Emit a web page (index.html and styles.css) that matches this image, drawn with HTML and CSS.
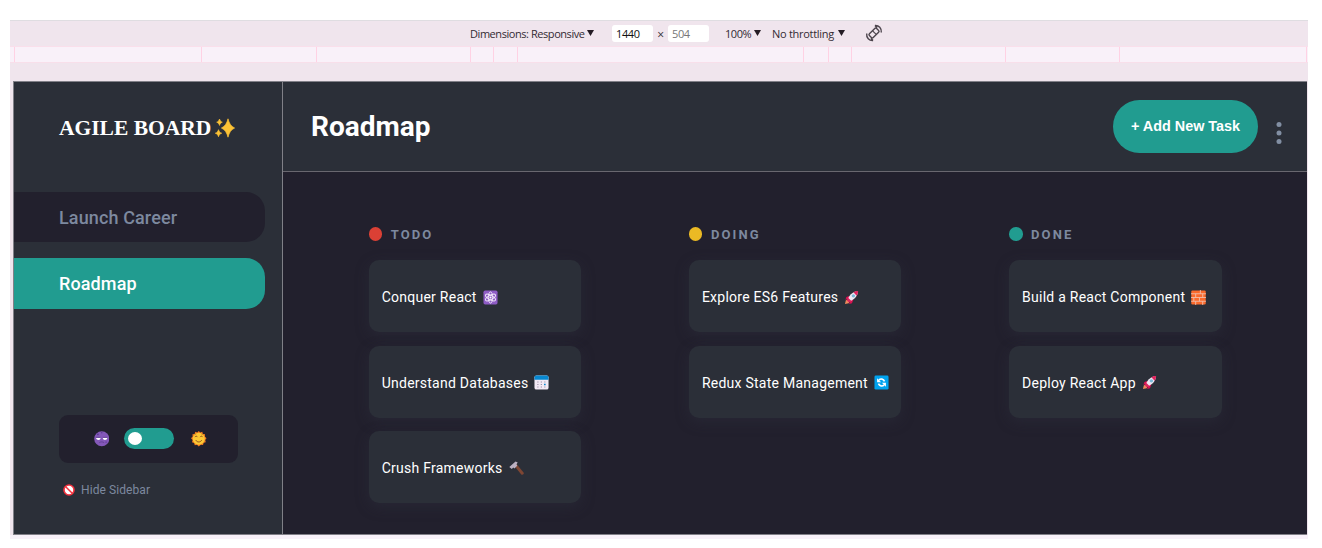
FILE: index.html
```html
<!DOCTYPE html>
<html lang="en">
<head>
<meta charset="utf-8">
<title>Agile Board</title>
<link rel="stylesheet" href="styles.css">
</head>
<body>
<svg class="defs" aria-hidden="true">
  <symbol id="rocket" viewBox="0 0 16 16">
    <path d="M1 15l1-4 3-1 1 2-1 2z" fill="#f08a5c"/>
    <path d="M6 6L2.500 7.500 1.500 10.500 5 9.500zM10 10l-1.500 4L5.500 15 6.500 11z" fill="#d81050"/>
    <path d="M15 1c-5 0-9 4-11 8.500L6.500 12C11 10 15 6 15 1z" fill="#eee7f2"/>
    <path d="M15 1c-2 0-3.500.500-5 1.500L13.500 6C14.500 4.500 15 3 15 1zM4.500 8.300L3 11l2 2 2.700-1.500z" fill="#e0245e"/>
    <circle cx="10" cy="6.200" r="1.800" fill="#79b8d8"/>
  </symbol>
</svg>
<div class="device">
  <div class="toolbar">
    <span class="t-dim">Dimensions: Responsive</span><i class="caret"></i>
    <span class="field t-w">1440</span><span class="times">×</span><span class="field t-h">504</span>
    <span class="t-zoom">100%</span><i class="caret"></i>
    <span class="t-thr">No throttling</span><i class="caret"></i>
    <svg class="rotate" viewBox="0 0 18 18" fill="none" stroke="#4c444c" stroke-width="1.400">
      <rect x="6.300" y="3.900" width="5.400" height="10.200" rx="1.300" transform="rotate(45 9 9)"/>
      <path d="M10 1.500c3.800-.3 6.800 2.700 6.300 7M10 1.500l2 2.200M8 16.500c-3.800.3-6.800-2.700-6.300-7M8 16.500l-2-2.200"/>
      <path d="M7.600 6.800l3.600 3.600" stroke-width="1.200"/>
    </svg>
  </div>
  <div class="ruler"><i></i><i></i><i></i><i></i><i></i><i></i><i></i><i></i><i></i><i></i><i></i><i></i></div>
  <div class="app">
    <aside class="sidebar">
      <div class="logo"><span>AGILE BOARD</span>
        <svg class="sparkles" viewBox="0 0 20 20" fill="#fcc235" stroke="#fcc235" stroke-width=".7" stroke-linejoin="round"><path d="M13 .8C14.200 5.500 16 8.300 19.600 10c-3.600 1.700-5.400 4.500-6.600 9.200-1.200-4.700-3-7.500-6.600-9.200C10 8.300 11.800 5.500 13 .8z"/><path d="M4.500 1c.5 1.800 1.200 2.500 2.800 3.200-1.600.7-2.300 1.400-2.800 3.200-.5-1.800-1.200-2.500-2.800-3.200C3.300 3.500 4 2.800 4.500 1zM3.500 11.700c.6 2 1.400 2.900 3.200 3.500-1.800.7-2.600 1.500-3.200 3.500-.6-2-1.400-2.800-3.200-3.500 1.800-.6 2.600-1.500 3.200-3.500z"/></svg>
      </div>
      <nav class="boards">
        <a class="board"><span class="b-launch">Launch Career</span></a>
        <a class="board active"><span class="b-road">Roadmap</span></a>
      </nav>
      <div class="theme">
        <svg class="face" viewBox="0 0 16 16"><circle cx="8" cy="8" r="7.800" fill="#8458b8"/><circle cx="4" cy="3.500" r="1" fill="#5c3d96"/><circle cx="8" cy="1.800" r=".8" fill="#5c3d96"/><circle cx="12.500" cy="11.500" r="1" fill="#6f46a5"/><path d="M2 7h4.800c0 3-4.200 3-4.800 0zM9 7h4.800c-.4 3-4.500 3-4.800 0z" fill="#fff"/><path d="M2 6.600h4.800M9 6.600h4.800M5.500 12c1.500-1 3.500-1 5 0" stroke="#5a3a8c" stroke-width=".8" fill="none"/></svg>
        <span class="switch"><i></i></span>
        <svg class="face" viewBox="0 0 16 16"><path d="M8 0l1.500 1.600L11.600.9l.7 2.100 2.200.4-.2 2.300L16 7.500l-1.300 1.700.5 2.300-2.100.7-.7 2.300-2.300-.3L8 16l-1.800-1.700-2.300.4-.7-2.300-2.200-.8.6-2.300L0 7.500l1.700-1.700-.2-2.400 2.200-.4.7-2.100 2.100.7z" fill="#f57c20"/><circle cx="8" cy="8" r="6.200" fill="#fdc934"/><path d="M4 6.300c.8-1.300 2-1.300 2.600 0M9.400 6.300c.8-1.300 2-1.300 2.600 0M5 9.500c1.200 2.400 4.800 2.400 6 0" stroke="#8a4b20" stroke-width="1" fill="none"/><path d="M3.500 4l2-1M12.500 4l-2-1" stroke="#c47e1a" stroke-width=".7"/></svg>
      </div>
      <div class="hide">
        <svg class="ban" viewBox="0 0 12 12"><circle cx="6" cy="6" r="5" fill="#fff" stroke="#f5333f" stroke-width="1.600"/><path d="M2.500 2.500l7 7" stroke="#f5333f" stroke-width="1.500"/></svg>
        <span>Hide Sidebar</span>
      </div>
    </aside>
    <div class="main">
      <header class="header">
        <h1>Roadmap</h1>
        <button class="add">+ Add New Task</button>
        <svg class="dots" viewBox="0 0 6 24" fill="#828fa3"><circle cx="3" cy="3.500" r="2.500"/><circle cx="3" cy="12" r="2.500"/><circle cx="3" cy="20.600" r="2.500"/></svg>
      </header>
      <div class="columns">
        <section class="column">
          <h2><i class="dot red"></i><span>TODO</span></h2>
          <div class="card"><span>Conquer React</span>
            <svg viewBox="0 0 16 16"><rect x=".5" y=".5" width="15" height="15" rx="1.800" fill="#8e5cc5"/><g fill="none" stroke="#f2eafa" stroke-width="1"><ellipse cx="8" cy="8" rx="2.300" ry="6"/><ellipse cx="8" cy="8" rx="2.300" ry="6" transform="rotate(60 8 8)"/><ellipse cx="8" cy="8" rx="2.300" ry="6" transform="rotate(-60 8 8)"/></g><circle cx="8" cy="8" r="1.100" fill="#fff"/></svg></div>
          <div class="card"><span>Understand Databases</span>
            <svg viewBox="0 0 16 16"><rect x=".5" y=".5" width="15" height="15" rx="2" fill="#f2eaf5"/><path d="M.5 5V2.500a2 2 0 012-2h11a2 2 0 012 2V5z" fill="#0788d1"/><g fill="#9d91a8"><path d="M3.500 6.800h1.300v1.200H3.500zM7.200 6.800h1.300v1.200H7.200zM10.900 6.800h1.300v1.200h-1.300zM3.500 9.500h1.300v1.200H3.500zM7.200 9.500h1.300v1.200H7.200zM3.500 12.200h1.300v1.200H3.500zM7.200 12.200h1.300v1.200H7.200zM10.900 12.200h1.300v1.200h-1.300z"/></g><path d="M10.700 9.200h1.700V11h-1.700z" fill="#0788d1"/></svg></div>
          <div class="card"><span>Crush Frameworks</span>
            <svg viewBox="0 0 16 16"><path d="M5.500 5l2.300-2 7.700 9.300c1 1.500-1 3.200-2.400 2z" fill="#7e4633"/><path d="M7 .5L9.300 1.700 8 3.500l.8 1.600L5.800 8 4.500 6.800 3 8.500.3 6.300z" fill="#bbb1c2"/></svg></div>
        </section>
        <section class="column">
          <h2><i class="dot yellow"></i><span>DOING</span></h2>
          <div class="card"><span>Explore ES6 Features</span><svg><use href="#rocket"/></svg></div>
          <div class="card"><span>Redux State Management</span>
            <svg viewBox="0 0 16 16"><rect x=".5" y=".5" width="15" height="15" rx="1.500" fill="#00a3ee"/><path d="M5.200 5.500c1.800-1.900 5-1.500 6 1.300M10.800 10.500c-1.800 1.900-5 1.500-6-1.300" fill="none" stroke="#fff" stroke-width="1.700"/><path d="M3.300 3.500v4.300h4.300zM12.700 12.500V8.200H8.400z" fill="#fff"/></svg></div>
        </section>
        <section class="column">
          <h2><i class="dot green"></i><span>DONE</span></h2>
          <div class="card"><span>Build a React Component</span>
            <svg viewBox="0 0 16 16"><rect x=".3" y=".5" width="15.400" height="15" rx="1.200" fill="#fb6a2c"/><path d="M0 4h16M0 8h16M0 12h16M10 0v4M5 4v4M12.500 4v4M9 8v4M3 8v4M5 12v4M12.500 12v4" stroke="#eec2b3" stroke-width=".9"/></svg></div>
          <div class="card"><span>Deploy React App</span><svg><use href="#rocket"/></svg></div>
        </section>
      </div>
    </div>
  </div>
</div>
</body>
</html>
```
FILE: styles.css
```css
* { box-sizing: border-box; }
body { margin: 0; padding: 20px 14px 9px 10px; height: 548px; background: #fff; font-family: Roboto, "Liberation Sans", sans-serif; overflow: hidden; }
span, h1, button { white-space: nowrap; }
svg { display: block; flex: none; }
.defs { width: 0; height: 0; position: absolute; }
.device { width: 1298px; height: 519px; background: linear-gradient(#f0e5ed 0 515px, #f8f1f9 515px); }
.toolbar { height: 26px; border-top: 1px solid #dfdde1; padding-left: 460px; padding-bottom: 1px; display: flex; align-items: center; font-family: "Open Sans", "Noto Sans", sans-serif; font-size: 11px; letter-spacing: -.44px; color: #332b33; }
.t-dim { width: 117px; }
.caret { width: 7px; height: 6px; background: #241c24; clip-path: polygon(0 0, 100% 0, 50% 100%); }
.field { width: 41px; height: 17px; line-height: 17px; padding-left: 4px; border-radius: 3px; background: #fff; letter-spacing: -.4px; }
.t-w { margin-left: 18px; color: #111; }
.times { width: 15px; text-align: center; padding-top: 3px; font-size: 12px; }
.t-h { color: #777; }
.t-zoom { margin-left: 16px; width: 29px; }
.t-thr { margin-left: 11px; width: 66px; letter-spacing: -.28px; }
.rotate { width: 18px; height: 18px; margin-left: 20px; }
.ruler { height: 17px; margin-bottom: 18px; padding-left: 4px; background: #f9f1f9; border-top: 1px solid #fadfeb; border-bottom: 1px solid #f8dfea; display: grid; grid-template-columns: 187px 115px 154px 23px 24px 286px 25px 23px 154px 114px 187px 1px; }
.ruler i { border-left: 1px solid #ffd2e4; }
.app { margin-left: 3px; width: 1294px; height: 454px; display: flex; border: 1px solid #818088; border-right: 0; background: #22202d; }
.sidebar { width: 269px; border-right: 1px solid #808087; background: #2b2f38; display: flex; flex-direction: column; color: #7d899f; }
.logo { height: 110px; padding: 0 0 18px 45px; display: flex; align-items: center; font: bold 21.500px "Liberation Serif", serif; color: #fff; }
.sparkles { width: 20px; height: 20px; margin-left: 4px; }
.boards { display: grid; gap: 16px; grid-auto-rows: 50.300px; padding-right: 17.500px; }
.board { display: flex; align-items: center; padding-left: 45px; border-radius: 0 19px 19px 0; background: #22202d; font-size: 18px; font-weight: 500; letter-spacing: .12px; }
.board.active { background: #219c90; color: #fff; padding-top: 1px; }
.theme { margin: 106.400px 0 0 45px; width: 179px; height: 48px; padding-left: 3px; border-radius: 9px; background: #22202d; display: flex; align-items: center; justify-content: center; gap: 15px; }
.face { width: 15.500px; height: 15.500px; }
.face:last-child { margin-left: 2px; }
.switch { width: 50px; height: 21px; border-radius: 11px; background: #219c90; padding: 4px; }
.switch i { display: block; width: 14px; height: 13px; border-radius: 50%; background: #fff; }
.hide { margin: 20px 0 0 49px; display: flex; align-items: center; gap: 6px; font-size: 12px; letter-spacing: .08px; height: 14px; }
.ban { width: 12px; height: 12px; }
.main { flex: 1; }
.header { height: 90px; background: #2b2f38; border-bottom: 1px solid #69676f; display: flex; align-items: center; padding: 0 0 1px 28px; }
h1 { margin: 2px 0 0; font-size: 28px; line-height: 34px; font-weight: 700; color: #fff; flex: 1; }
.add { width: 145px; height: 53px; border: 0; border-radius: 27px; background: #219c90; color: #fff; font: bold 14.400px "Liberation Sans", sans-serif; padding: 0; }
.dots { width: 6px; height: 24px; margin: 13px 25.500px 0 17.500px; }
.columns { display: grid; grid-template-columns: repeat(3, 212.500px); column-gap: 107.700px; padding: 53px 0 0 85.700px; }
h2 { margin: 0 0 17px; height: 18px; display: flex; align-items: center; gap: 8.500px; font-size: 13px; font-weight: 700; letter-spacing: 2.100px; color: #7d899f; }
.dot { width: 13.500px; height: 13.500px; border-radius: 50%; }
.red { background: #db4035; }
.yellow { background: #ebb924; }
.green { background: #219c90; }
.card { height: 72px; margin-bottom: 13.600px; padding: 2px 0 0 13px; border-radius: 10px; background: #2b2f38; box-shadow: 0 4px 14px #2f314066; color: #fff; font-size: 14px; letter-spacing: .25px; display: flex; align-items: center; gap: 6px; }
.card svg { width: 15px; height: 15px; }
```
